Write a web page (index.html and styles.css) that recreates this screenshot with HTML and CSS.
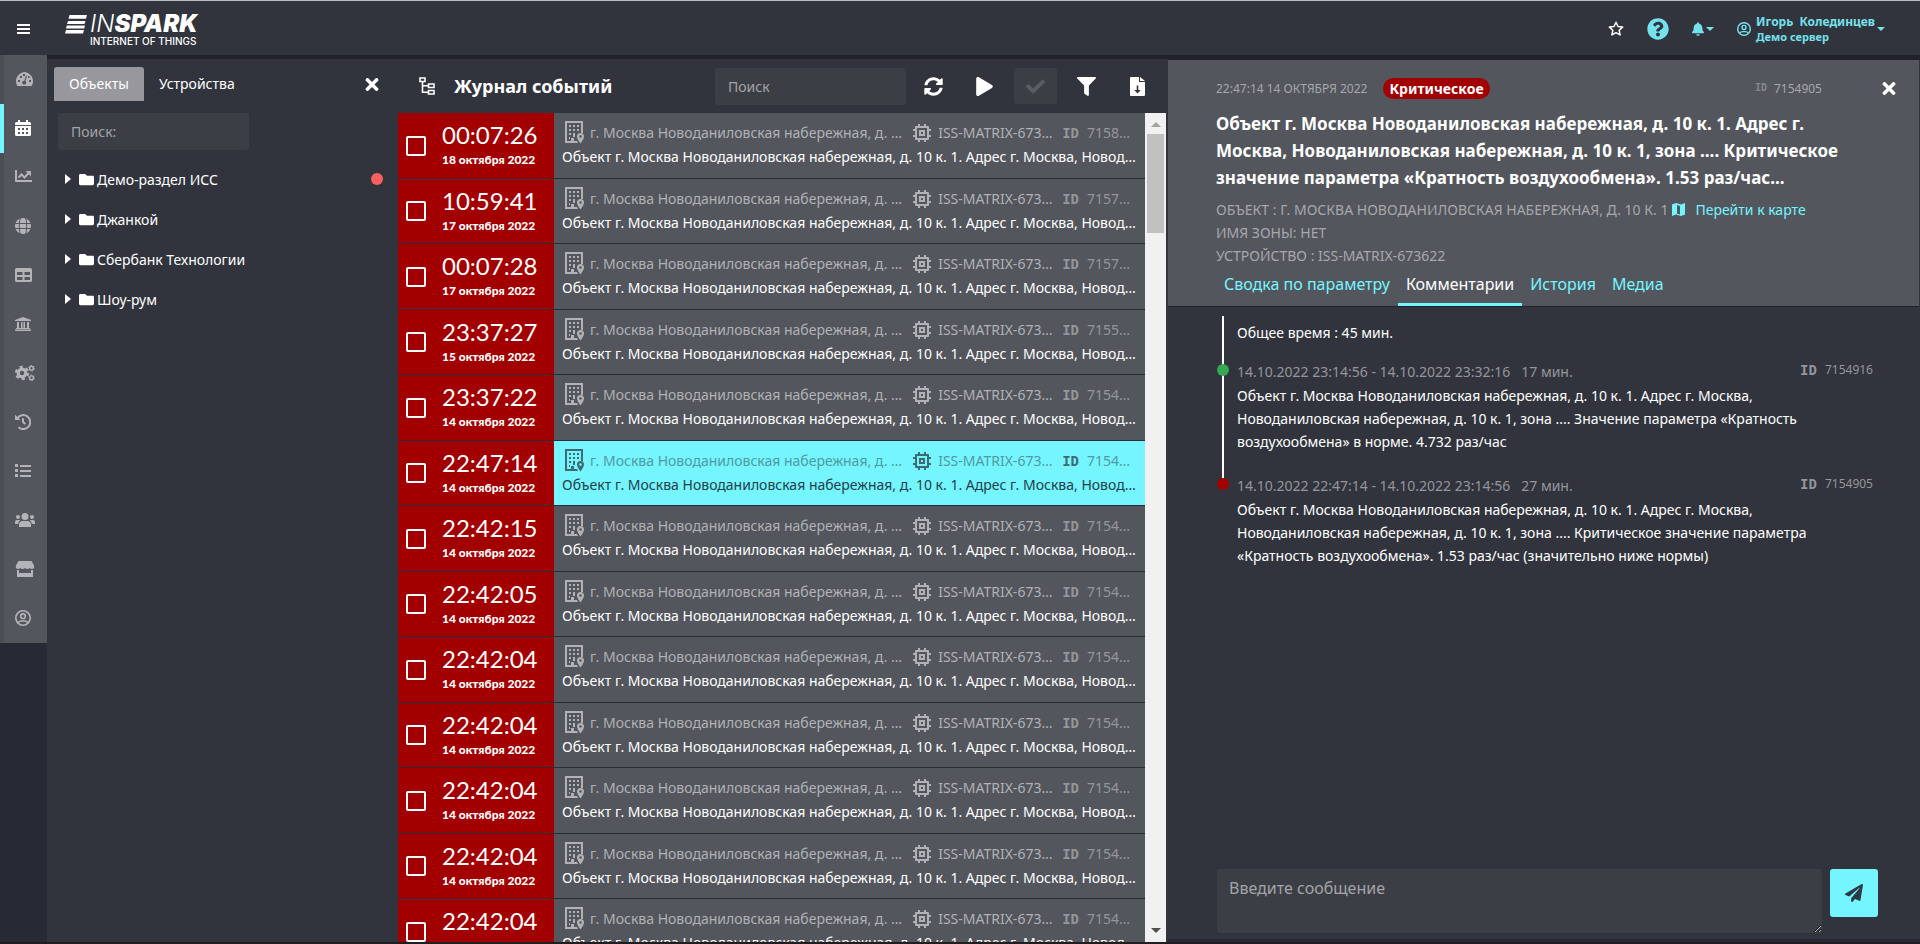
FILE: index.html
```html
<!DOCTYPE html>
<html lang="ru">
<head>
<meta charset="utf-8">
<meta name="viewport" content="width=device-width, initial-scale=1">
<title>INSPARK — Журнал событий</title>
<link rel="stylesheet" href="styles.css">
</head>
<body>
<svg class="sprite" aria-hidden="true">
  <symbol id="i-times" viewBox="0 0 352 512"><path d="M242.720 256l100.070-100.070c12.280-12.280 12.280-32.190 0-44.480l-22.240-22.240c-12.280-12.280-32.190-12.280-44.480 0L176 189.280 75.930 89.210c-12.280-12.280-32.190-12.280-44.480 0L9.210 111.450c-12.280 12.280-12.280 32.190 0 44.480L109.280 256 9.210 356.070c-12.280 12.280-12.280 32.190 0 44.480l22.240 22.240c12.280 12.280 32.200 12.280 44.480 0L176 322.720l100.070 100.070c12.280 12.280 32.200 12.280 44.480 0l22.240-22.240c12.280-12.280 12.280-32.190 0-44.480L242.720 256z"/></symbol>
  <symbol id="i-folder" viewBox="0 0 512 512"><path d="M464 128H272l-64-64H48C21.490 64 0 85.490 0 112v288c0 26.510 21.490 48 48 48h416c26.510 0 48-21.490 48-48V176c0-26.510-21.490-48-48-48z"/></symbol>
  <symbol id="i-user" viewBox="0 0 16 16"><g fill="none" stroke="currentColor" stroke-width="1.600"><circle cx="8" cy="8" r="7.200"/><circle cx="8" cy="6.200" r="2.300"/><path d="M3.200 12.600c1-2 2.600-1.600 4.800-1.600s3.800-.4 4.800 1.600"/></g></symbol>
  <symbol id="i-building" viewBox="0 0 19 23"><path fill-rule="evenodd" d="M0 0h18v12h-2V2H2v18h4v-3h3v3h3l1 2H0z"/><path d="M4 4h2v2H4zM8 4h2v2H8zM12 4h2v2h-2zM4 8h2v2H4zM8 8h2v2H8zM12 8h2v2h-2zM4 12h2v2H4zM8 12h2v2H8zM4 16h1v2H4zM8 14h2v2H8z"/><path fill-rule="evenodd" d="M15.500 12a3.500 3.500 0 0 1 3.500 3.500c0 2.500-3.500 7-3.500 7s-3.500-4.500-3.500-7a3.500 3.500 0 0 1 3.500-3.500zm0 2.200a1.300 1.300 0 1 0 0 2.600 1.300 1.300 0 0 0 0-2.600z"/></symbol>
  <symbol id="i-chip" viewBox="0 0 18 18"><path fill-rule="evenodd" d="M5 0h2v2h4V0h2v2h2a1 1 0 0 1 1 1v2h2v2h-2v4h2v2h-2v2a1 1 0 0 1-1 1h-2v2h-2v-2H7v2H5v-2H3a1 1 0 0 1-1-1v-2H0v-2h2V7H0V5h2V3a1 1 0 0 1 1-1h2zM4 4v10h10V4zM6 6h6v6H6zM8 8v2h2V8z"/></symbol>
</svg>

<header class="topbar">
  <button class="icon-btn menu-btn" aria-label="Меню"><svg width="13" height="11" viewBox="0 0 13 11"><path d="M0 0h13v2H0zM0 4h13v2H0zM0 8h13v2H0z"/></svg></button>
  <a class="logo" href="#" aria-label="INSPARK Internet of Things">
    <svg class="logo-mark" width="23" height="19" viewBox="0 0 23 19"><path d="M4.500 0H22l-1 3.800H3.500zM3 6h17.500l-1 3H2zM1.800 10.500H20l-.8 3H1zM1 15h18l-1 3.500H0z"/></svg>
    <span class="logo-words"><span class="logo-name"><span class="logo-thin">IN</span>SPARK</span><span class="logo-sub">INTERNET OF THINGS</span></span>
  </a>
  <nav class="top-actions" aria-label="Действия">
    <button class="icon-btn star-btn" aria-label="Избранное"><svg width="16" height="16" viewBox="0 0 16 16"><path fill="none" stroke="currentColor" stroke-width="1.500" stroke-linejoin="round" d="M8 1.300l2 4.200 4.600.6-3.400 3.200.9 4.600L8 11.700l-4.100 2.200.9-4.600L1.400 6.100 6 5.500z"/></svg></button>
    <button class="icon-btn" aria-label="Помощь"><svg width="22" height="22" viewBox="0 0 512 512"><path d="M504 256c0 136.997-111.043 248-248 248S8 392.997 8 256C8 119.083 119.043 8 256 8s248 111.083 248 248zM262.655 90c-54.497 0-89.255 22.957-116.549 63.758-3.536 5.286-2.353 12.415 2.715 16.258l34.699 26.310c5.205 3.947 12.621 3.008 16.665-2.122 17.864-22.658 30.113-35.797 57.303-35.797 20.429 0 45.698 13.148 45.698 32.958 0 14.976-12.363 22.667-32.534 33.976C247.128 238.528 216 254.941 216 296v4c0 6.627 5.373 12 12 12h56c6.627 0 12-5.373 12-12v-1.333c0-28.462 83.186-29.647 83.186-106.667 0-58.002-60.165-102-116.531-102zM256 338c-25.365 0-46 20.635-46 46 0 25.364 20.635 46 46 46s46-20.636 46-46c0-25.365-20.635-46-46-46z"/></svg></button>
    <button class="icon-btn bell-btn" aria-label="Уведомления"><svg width="12" height="14" viewBox="0 0 448 512"><path d="M224 512c35.320 0 63.970-28.650 63.970-64H160.030c0 35.350 28.650 64 63.970 64zm215.390-149.710c-19.320-20.760-55.470-51.990-55.470-154.290 0-77.700-54.480-139.900-127.940-155.160V32c0-17.670-14.320-32-31.980-32s-31.980 14.330-31.980 32v20.840C118.560 68.100 64.080 130.300 64.080 208c0 102.300-36.150 133.530-55.470 154.290-6 6.450-8.660 14.160-8.610 21.710.110 16.400 12.980 32 32.100 32h383.800c19.120 0 32-15.600 32.100-32 .050-7.550-2.610-15.270-8.610-21.710z"/></svg><svg width="8" height="4" viewBox="0 0 8 4"><path d="M0 0h8L4 4z"/></svg></button>
    <button class="icon-btn user-btn"><svg width="14" height="14"><use href="#i-user"/></svg><span class="user-text"><span class="user-name">Игорь&nbsp; Колединцев</span><span class="user-server">Демо сервер</span></span><svg width="8" height="4" viewBox="0 0 8 4"><path d="M0 0h8L4 4z"/></svg></button>
  </nav>
</header>

<div class="workspace">
  <nav class="rail" aria-label="Разделы">
    <a href="#" aria-label="Панель"><svg width="19" height="16" viewBox="0 0 19 16"><path fill-rule="evenodd" d="M9.500 1A9.300 9.300 0 0 1 17 14.500a1 1 0 0 1-1 .5H3a1 1 0 0 1-1-.5A9.300 9.300 0 0 1 9.500 1zM3 9h2v2H3zM5 5h2v2H5zM8 3h2v2H8zM14 9h2v2h-2zM13 5h1.500v2H13zM11 4.500l1 .4-1.600 5.200A2 2 0 1 1 9.400 9.700z"/></svg></a>
    <a href="#" class="active" aria-current="page" aria-label="Журнал"><svg width="16" height="16" viewBox="0 0 16 16"><path fill-rule="evenodd" d="M3 0h2v2h6V0h2v2h1.500A1.500 1.500 0 0 1 16 3.500V5H0V3.500A1.500 1.500 0 0 1 1.500 2H3zM0 6h16v8.500a1.500 1.500 0 0 1-1.500 1.500h-13A1.500 1.500 0 0 1 0 14.500zM3 8v2h2V8zM7 8v2h2V8zM11 8v2h2V8zM3 12v2h2v-2zM7 12v2h2v-2zM11 12v2h2v-2z"/></svg></a>
    <a href="#" aria-label="Графики"><svg width="17" height="13" viewBox="0 0 17 13"><path d="M0 0h2v10h15v2H1a1 1 0 0 1-1-1z"/><path fill="none" stroke="currentColor" stroke-width="2" d="M3.500 7.500l3-3 3 3 4-4.200"/><path d="M10.500 1H16v5.500z"/></svg></a>
    <a href="#" aria-label="Карта"><svg width="16" height="16" viewBox="0 0 16 16"><circle cx="8" cy="8" r="8"/><path class="cut" d="M0 5.500h16M0 10.500h16M5.300 0c-1.400 5-1.400 11 0 16M10.700 0c1.400 5 1.400 11 0 16"/></svg></a>
    <a href="#" aria-label="Таблица"><svg width="17" height="14" viewBox="0 0 17 14"><path fill-rule="evenodd" d="M1.500 0h14A1.500 1.500 0 0 1 17 1.500v11a1.500 1.500 0 0 1-1.500 1.500h-14A1.500 1.500 0 0 1 0 12.500v-11A1.500 1.500 0 0 1 1.500 0zM2 4v3h5.500V4zM9.500 4v3H15V4zM2 9v3h5.500V9zM9.500 9v3H15V9z"/></svg></a>
    <a href="#" aria-label="Организации"><svg width="16" height="14" viewBox="0 0 16 14"><path d="M8 0l8 3v1H0V3zM2 5h2v6H2zM6 5h1.500v6H6zM8.500 5H10v6H8.500zM12 5h2v6h-2zM1 11h14v1H1zM0 12.500h16V14H0z"/></svg></a>
    <a href="#" aria-label="Настройки"><svg width="20" height="16" viewBox="0 0 20 16"><g fill="none" stroke="currentColor"><circle cx="7" cy="8" r="3.800" stroke-width="3.200"/><circle cx="7" cy="8" r="6" stroke-width="2.400" stroke-dasharray="3.140 3.140"/><circle cx="16.500" cy="3.200" r="1.900" stroke-width="1.400"/><circle cx="16.500" cy="3.200" r="2.800" stroke-width="1" stroke-dasharray="1.470 1.470"/><circle cx="16.500" cy="12.800" r="1.900" stroke-width="1.400"/><circle cx="16.500" cy="12.800" r="2.800" stroke-width="1" stroke-dasharray="1.470 1.470"/></g></svg></a>
    <a href="#" aria-label="История"><svg width="16" height="16" viewBox="0 0 16 16"><path fill="none" stroke="currentColor" stroke-width="2" d="M2.500 4A7 7 0 1 1 3.500 13.300M8 4.200V8l2.400 2"/><path d="M0 .8V6h5.600z"/></svg></a>
    <a href="#" aria-label="Список"><svg width="16" height="14" viewBox="0 0 16 14"><path d="M0 0h3v3H0zM5 1h11v2H5zM0 5h3v3H0zM5 6h11v2H5zM0 10h3v3H0zM5 11h11v2H5z"/></svg></a>
    <a href="#" aria-label="Пользователи"><svg width="20" height="14" viewBox="0 0 20 14"><circle cx="10" cy="3.500" r="3.500"/><path d="M4 14v-2.500C4 9.500 5.500 8 7.500 8h5c2 0 3.500 1.500 3.500 3.500V14z"/><circle cx="3" cy="4" r="2"/><circle cx="17" cy="4" r="2"/><path d="M0 11V9a2 2 0 0 1 2-2h2.500l.5.500C3.800 8.500 3.300 9.500 3.200 11zM20 11V9a2 2 0 0 0-2-2h-2.500l-.5.500c1.200 1 1.700 2 1.800 3.500z"/></svg></a>
    <a href="#" aria-label="Магазин"><svg width="20" height="16" viewBox="0 0 20 16"><path d="M3.500 0h13L19 4.500c.8 2-.4 3.500-2 3.500-1 0-1.700-.4-2.200-1-.6.600-1.300 1-2.300 1s-1.900-.4-2.500-1c-.6.600-1.500 1-2.500 1s-1.700-.4-2.300-1C4.700 7.600 4 8 3 8 1.400 8 .2 6.500 1 4.500zM2 9h2v3h12V9h2v7H2z"/></svg></a>
    <a href="#" aria-label="Профиль"><svg width="16" height="16"><use href="#i-user"/></svg></a>
  </nav>

  <aside class="tree">
    <div class="tree-head">
      <div class="tree-tabs" role="tablist">
        <button role="tab" aria-selected="true" class="tree-tab selected">Объекты</button>
        <button role="tab" aria-selected="false" class="tree-tab">Устройства</button>
      </div>
      <button class="icon-btn" aria-label="Закрыть"><svg width="14" height="19"><use href="#i-times"/></svg></button>
    </div>
    <input class="field tree-search" type="search" placeholder="Поиск:" aria-label="Поиск объектов">
    <ul class="tree-list">
      <li><button class="node"><svg width="6" height="10" viewBox="0 0 6 10"><path d="M0 0l6 5-6 5z"/></svg><svg class="folder" width="15" height="15"><use href="#i-folder"/></svg>Демо-раздел ИСС</button><span class="alert-dot"></span></li>
      <li><button class="node"><svg width="6" height="10" viewBox="0 0 6 10"><path d="M0 0l6 5-6 5z"/></svg><svg class="folder" width="15" height="15"><use href="#i-folder"/></svg>Джанкой</button></li>
      <li><button class="node"><svg width="6" height="10" viewBox="0 0 6 10"><path d="M0 0l6 5-6 5z"/></svg><svg class="folder" width="15" height="15"><use href="#i-folder"/></svg>Сбербанк Технологии</button></li>
      <li><button class="node"><svg width="6" height="10" viewBox="0 0 6 10"><path d="M0 0l6 5-6 5z"/></svg><svg class="folder" width="15" height="15"><use href="#i-folder"/></svg>Шоу-рум</button></li>
    </ul>
  </aside>

  <main class="journal">
    <div class="journal-head">
      <button class="icon-btn" aria-label="Дерево"><svg width="16" height="18" viewBox="0 0 16 18"><g fill="none" stroke="currentColor" stroke-width="1.600"><path d="M1 1h5v3.500H1zM9.500 7H15v3.500H9.500zM9.500 13.500H15V17H9.500zM3.500 4.500v10.700h6M3.500 8.700h6"/></g></svg></button>
      <h1>Журнал событий</h1>
      <input class="field journal-search" type="search" placeholder="Поиск" aria-label="Поиск событий">
      <div class="tools">
        <button class="tool" aria-label="Обновить"><svg width="19" height="19" viewBox="0 0 512 512"><path d="M370.720 133.280C339.458 104.008 298.888 87.962 255.848 88c-77.458.068-144.328 53.178-162.791 126.850-1.344 5.363-6.122 9.150-11.651 9.150H24.103c-7.498 0-13.194-6.807-11.807-14.176C33.933 94.924 134.813 8 256 8c66.448 0 126.791 26.136 171.315 68.685L463.030 40.970C478.149 25.851 504 36.559 504 57.941V192c0 13.255-10.745 24-24 24H345.941c-21.382 0-32.090-25.851-16.971-40.971l41.750-41.749zM32 296h134.059c21.382 0 32.090 25.851 16.971 40.971l-41.750 41.750c31.262 29.273 71.835 45.319 114.876 45.280 77.418-.070 144.315-53.144 162.787-126.849 1.344-5.363 6.122-9.150 11.651-9.150h57.304c7.498 0 13.194 6.807 11.807 14.176C478.067 417.076 377.187 504 256 504c-66.448 0-126.791-26.136-171.315-68.685L48.970 471.030C33.851 486.149 8 475.441 8 454.059V320c0-13.255 10.745-24 24-24z"/></svg></button>
        <button class="tool" aria-label="Воспроизвести"><svg width="17" height="19" viewBox="0 0 448 512"><path d="M424.400 214.700L72.400 6.600C43.800-10.300 0 6.100 0 47.900V464c0 37.500 40.700 60.100 72.400 41.300l352-208c31.400-18.500 31.500-64.100 0-82.600z"/></svg></button>
        <button class="tool muted" disabled aria-label="Подтвердить"><svg width="19" height="19" viewBox="0 0 512 512"><path d="M173.898 439.404l-166.400-166.400c-9.997-9.997-9.997-26.206 0-36.204l36.203-36.204c9.997-9.998 26.207-9.998 36.204 0L192 312.690 432.095 72.596c9.997-9.997 26.207-9.997 36.204 0l36.203 36.204c9.997 9.997 9.997 26.206 0 36.204l-294.400 294.401c-9.998 9.997-26.207 9.997-36.204-.001z"/></svg></button>
        <button class="tool" aria-label="Фильтр"><svg width="19" height="19" viewBox="0 0 512 512"><path d="M487.976 0H24.028C2.710 0-8.047 25.866 7.058 40.971L192 225.941V432c0 7.831 3.821 15.170 10.237 19.662l80 55.980C298.020 518.690 320 507.493 320 487.980V225.941l184.947-184.970C520.021 25.896 509.338 0 487.976 0z"/></svg></button>
        <button class="tool" aria-label="Скачать"><svg width="15" height="19" viewBox="0 0 15 19"><path fill-rule="evenodd" d="M1 0h8v5h6v13a1 1 0 0 1-1 1H1a1 1 0 0 1-1-1V1a1 1 0 0 1 1-1zM6.700 8.500V13H4.200l3.300 3.500L10.800 13H8.300V8.500z"/><path d="M10 0l5 4h-5z"/></svg></button>
      </div>
    </div>
    <div class="journal-body">
      <ul class="events">
        <li class="event"><div class="stamp"><input type="checkbox" aria-label="Выбрать событие 1"><time><b>00:07:26</b><span>18 <i>октября</i> 2022</span></time></div><div class="info"><div class="source"><svg class="bld" width="19" height="23"><use href="#i-building"/></svg><span class="place">г. Москва Новоданиловская набережная, д. 10 к. 1</span><svg class="chip" width="18" height="18"><use href="#i-chip"/></svg><span class="device">ISS-MATRIX-673622</span><span class="id-mark">ID</span><span class="num">7158312</span></div><p>Объект г. Москва Новоданиловская набережная, д. 10 к. 1. Адрес г. Москва, Новоданиловская набережная</p></div></li>
        <li class="event"><div class="stamp"><input type="checkbox" aria-label="Выбрать событие 2"><time><b>10:59:41</b><span>17 <i>октября</i> 2022</span></time></div><div class="info"><div class="source"><svg class="bld" width="19" height="23"><use href="#i-building"/></svg><span class="place">г. Москва Новоданиловская набережная, д. 10 к. 1</span><svg class="chip" width="18" height="18"><use href="#i-chip"/></svg><span class="device">ISS-MATRIX-673622</span><span class="id-mark">ID</span><span class="num">7157640</span></div><p>Объект г. Москва Новоданиловская набережная, д. 10 к. 1. Адрес г. Москва, Новоданиловская набережная</p></div></li>
        <li class="event"><div class="stamp"><input type="checkbox" aria-label="Выбрать событие 3"><time><b>00:07:28</b><span>17 <i>октября</i> 2022</span></time></div><div class="info"><div class="source"><svg class="bld" width="19" height="23"><use href="#i-building"/></svg><span class="place">г. Москва Новоданиловская набережная, д. 10 к. 1</span><svg class="chip" width="18" height="18"><use href="#i-chip"/></svg><span class="device">ISS-MATRIX-673622</span><span class="id-mark">ID</span><span class="num">7157102</span></div><p>Объект г. Москва Новоданиловская набережная, д. 10 к. 1. Адрес г. Москва, Новоданиловская набережная</p></div></li>
        <li class="event"><div class="stamp"><input type="checkbox" aria-label="Выбрать событие 4"><time><b>23:37:27</b><span>15 <i>октября</i> 2022</span></time></div><div class="info"><div class="source"><svg class="bld" width="19" height="23"><use href="#i-building"/></svg><span class="place">г. Москва Новоданиловская набережная, д. 10 к. 1</span><svg class="chip" width="18" height="18"><use href="#i-chip"/></svg><span class="device">ISS-MATRIX-673622</span><span class="id-mark">ID</span><span class="num">7155820</span></div><p>Объект г. Москва Новоданиловская набережная, д. 10 к. 1. Адрес г. Москва, Новоданиловская набережная</p></div></li>
        <li class="event"><div class="stamp"><input type="checkbox" aria-label="Выбрать событие 5"><time><b>23:37:22</b><span>14 <i>октября</i> 2022</span></time></div><div class="info"><div class="source"><svg class="bld" width="19" height="23"><use href="#i-building"/></svg><span class="place">г. Москва Новоданиловская набережная, д. 10 к. 1</span><svg class="chip" width="18" height="18"><use href="#i-chip"/></svg><span class="device">ISS-MATRIX-673622</span><span class="id-mark">ID</span><span class="num">7154930</span></div><p>Объект г. Москва Новоданиловская набережная, д. 10 к. 1. Адрес г. Москва, Новоданиловская набережная</p></div></li>
        <li class="event current"><div class="stamp"><input type="checkbox" aria-label="Выбрать событие 6"><time><b>22:47:14</b><span>14 <i>октября</i> 2022</span></time></div><div class="info"><div class="source"><svg class="bld" width="19" height="23"><use href="#i-building"/></svg><span class="place">г. Москва Новоданиловская набережная, д. 10 к. 1</span><svg class="chip" width="18" height="18"><use href="#i-chip"/></svg><span class="device">ISS-MATRIX-673622</span><span class="id-mark">ID</span><span class="num">7154905</span></div><p>Объект г. Москва Новоданиловская набережная, д. 10 к. 1. Адрес г. Москва, Новоданиловская набережная</p></div></li>
        <li class="event"><div class="stamp"><input type="checkbox" aria-label="Выбрать событие 7"><time><b>22:42:15</b><span>14 <i>октября</i> 2022</span></time></div><div class="info"><div class="source"><svg class="bld" width="19" height="23"><use href="#i-building"/></svg><span class="place">г. Москва Новоданиловская набережная, д. 10 к. 1</span><svg class="chip" width="18" height="18"><use href="#i-chip"/></svg><span class="device">ISS-MATRIX-673622</span><span class="id-mark">ID</span><span class="num">7154899</span></div><p>Объект г. Москва Новоданиловская набережная, д. 10 к. 1. Адрес г. Москва, Новоданиловская набережная</p></div></li>
        <li class="event"><div class="stamp"><input type="checkbox" aria-label="Выбрать событие 8"><time><b>22:42:05</b><span>14 <i>октября</i> 2022</span></time></div><div class="info"><div class="source"><svg class="bld" width="19" height="23"><use href="#i-building"/></svg><span class="place">г. Москва Новоданиловская набережная, д. 10 к. 1</span><svg class="chip" width="18" height="18"><use href="#i-chip"/></svg><span class="device">ISS-MATRIX-673622</span><span class="id-mark">ID</span><span class="num">7154898</span></div><p>Объект г. Москва Новоданиловская набережная, д. 10 к. 1. Адрес г. Москва, Новоданиловская набережная</p></div></li>
        <li class="event"><div class="stamp"><input type="checkbox" aria-label="Выбрать событие 9"><time><b>22:42:04</b><span>14 <i>октября</i> 2022</span></time></div><div class="info"><div class="source"><svg class="bld" width="19" height="23"><use href="#i-building"/></svg><span class="place">г. Москва Новоданиловская набережная, д. 10 к. 1</span><svg class="chip" width="18" height="18"><use href="#i-chip"/></svg><span class="device">ISS-MATRIX-673622</span><span class="id-mark">ID</span><span class="num">7154897</span></div><p>Объект г. Москва Новоданиловская набережная, д. 10 к. 1. Адрес г. Москва, Новоданиловская набережная</p></div></li>
        <li class="event"><div class="stamp"><input type="checkbox" aria-label="Выбрать событие 10"><time><b>22:42:04</b><span>14 <i>октября</i> 2022</span></time></div><div class="info"><div class="source"><svg class="bld" width="19" height="23"><use href="#i-building"/></svg><span class="place">г. Москва Новоданиловская набережная, д. 10 к. 1</span><svg class="chip" width="18" height="18"><use href="#i-chip"/></svg><span class="device">ISS-MATRIX-673622</span><span class="id-mark">ID</span><span class="num">7154896</span></div><p>Объект г. Москва Новоданиловская набережная, д. 10 к. 1. Адрес г. Москва, Новоданиловская набережная</p></div></li>
        <li class="event"><div class="stamp"><input type="checkbox" aria-label="Выбрать событие 11"><time><b>22:42:04</b><span>14 <i>октября</i> 2022</span></time></div><div class="info"><div class="source"><svg class="bld" width="19" height="23"><use href="#i-building"/></svg><span class="place">г. Москва Новоданиловская набережная, д. 10 к. 1</span><svg class="chip" width="18" height="18"><use href="#i-chip"/></svg><span class="device">ISS-MATRIX-673622</span><span class="id-mark">ID</span><span class="num">7154895</span></div><p>Объект г. Москва Новоданиловская набережная, д. 10 к. 1. Адрес г. Москва, Новоданиловская набережная</p></div></li>
        <li class="event"><div class="stamp"><input type="checkbox" aria-label="Выбрать событие 12"><time><b>22:42:04</b><span>14 <i>октября</i> 2022</span></time></div><div class="info"><div class="source"><svg class="bld" width="19" height="23"><use href="#i-building"/></svg><span class="place">г. Москва Новоданиловская набережная, д. 10 к. 1</span><svg class="chip" width="18" height="18"><use href="#i-chip"/></svg><span class="device">ISS-MATRIX-673622</span><span class="id-mark">ID</span><span class="num">7154894</span></div><p>Объект г. Москва Новоданиловская набережная, д. 10 к. 1. Адрес г. Москва, Новоданиловская набережная</p></div></li>
        <li class="event"><div class="stamp"><input type="checkbox" aria-label="Выбрать событие 13"><time><b>22:42:04</b><span>14 <i>октября</i> 2022</span></time></div><div class="info"><div class="source"><svg class="bld" width="19" height="23"><use href="#i-building"/></svg><span class="place">г. Москва Новоданиловская набережная, д. 10 к. 1</span><svg class="chip" width="18" height="18"><use href="#i-chip"/></svg><span class="device">ISS-MATRIX-673622</span><span class="id-mark">ID</span><span class="num">7154893</span></div><p>Объект г. Москва Новоданиловская набережная, д. 10 к. 1. Адрес г. Москва, Новоданиловская набережная</p></div></li>
      </ul>
      <div class="scrollbar" aria-hidden="true">
        <svg class="up" width="10" height="5" viewBox="0 0 10 5"><path d="M0 5l5-5 5 5z"/></svg>
        <div class="thumb"></div>
        <svg class="down" width="10" height="5" viewBox="0 0 10 5"><path d="M0 0l5 5 5-5z"/></svg>
      </div>
    </div>
  </main>

  <section class="details">
    <div class="summary">
      <div class="summary-top">
        <time>22:47:14 14 ОКТЯБРЯ 2022</time>
        <span class="badge">Критическое</span>
        <span class="summary-id"><span class="id-small">ID</span>7154905</span>
        <button class="icon-btn" aria-label="Закрыть"><svg width="14" height="19"><use href="#i-times"/></svg></button>
      </div>
      <h2>Объект г. Москва Новоданиловская набережная, д. 10 к. 1. Адрес г. Москва, Новоданиловская набережная, д. 10 к. 1, зона .... Критическое значение параметра «Кратность воздухообмена». 1.53 раз/час...</h2>
      <div class="meta">
        <div class="meta-place">ОБЪЕКТ : Г. МОСКВА НОВОДАНИЛОВСКАЯ НАБЕРЕЖНАЯ, Д. 10 К. 1<a href="#"><svg width="13" height="13" viewBox="0 0 13 13"><path fill-rule="evenodd" d="M0 1.500L4 0l5 1.500L13 0v11.500L9 13l-5-1.500L0 13zM5 2v8.700l3 .9V2.900z"/></svg>Перейти к карте</a></div>
        <div>ИМЯ ЗОНЫ: НЕТ</div>
        <div>УСТРОЙСТВО : ISS-MATRIX-673622</div>
      </div>
      <div class="tabs" role="tablist">
        <button role="tab" aria-selected="false">Сводка по параметру</button>
        <button role="tab" aria-selected="true" class="on">Комментарии</button>
        <button role="tab" aria-selected="false">История</button>
        <button role="tab" aria-selected="false">Медиа</button>
      </div>
    </div>
    <div class="comments">
      <div class="total">Общее время : 45 мин.</div>
      <article class="entry ok">
        <div class="entry-head"><span>14.10.2022 23:14:56 - 14.10.2022 23:32:16 &nbsp; 17 мин.</span><span class="entry-id"><span class="id-mark">ID</span>7154916</span></div>
        <p>Объект г. Москва Новоданиловская набережная, д. 10 к. 1. Адрес г. Москва, Новоданиловская набережная, д. 10 к. 1, зона .... Значение параметра «Кратность воздухообмена» в норме. 4.732 раз/час</p>
      </article>
      <article class="entry bad">
        <div class="entry-head"><span>14.10.2022 22:47:14 - 14.10.2022 23:14:56 &nbsp; 27 мин.</span><span class="entry-id"><span class="id-mark">ID</span>7154905</span></div>
        <p>Объект г. Москва Новоданиловская набережная, д. 10 к. 1. Адрес г. Москва, Новоданиловская набережная, д. 10 к. 1, зона .... Критическое значение параметра «Кратность воздухообмена». 1.53 раз/час (значительно ниже нормы)</p>
      </article>
    </div>
    <form class="composer">
      <textarea placeholder="Введите сообщение" aria-label="Введите сообщение"></textarea>
      <button type="button" class="send" aria-label="Отправить"><svg width="18" height="18" viewBox="0 0 512 512"><path d="M476 3.200L12.500 270.600c-18.100 10.400-15.800 35.600 2.200 43.200L121 358.400l287.300-253.200c5.500-4.900 13.300 2.600 8.600 8.300L176 407v80.500c0 23.600 28.500 32.900 42.500 15.800L282 426l124.600 52.200c14.200 6 30.400-2.900 33-18.200l72-432C515 7.800 493.300-6.800 476 3.200z"/></svg></button>
    </form>
  </section>
</div>
</body>
</html>
```

FILE: styles.css
```css
:root {
  --bg: #31343d;
  --field: #3c3e46;
  --panel: #53565d;
  --dark: #20212b;
  --cyan: #75f5ff;
  --red: #a20000;
  --muted: #a6a8ac;
}

* { box-sizing: border-box; }

body {
  margin: 0;
  height: 100vh;
  display: flex;
  flex-direction: column;
  overflow: hidden;
  padding-bottom: 2px;
  background: #211d20;
  color: #fff;
  font: 14px/23px "Noto Sans", "Open Sans", sans-serif;
}

button, input, textarea { font: inherit; color: inherit; border: 0; margin: 0; padding: 0; }
button { background: none; cursor: pointer; }
svg { fill: currentColor; flex: none; display: block; }
ul { list-style: none; margin: 0; padding: 0; }
p, h1, h2 { margin: 0; }
.sprite { position: absolute; width: 0; height: 0; }
.icon-btn { display: flex; align-items: center; }

/* Top bar */
.topbar {
  flex: none;
  height: 55px;
  display: flex;
  align-items: center;
  border-top: 1px solid #b4bcc6;
  background: var(--bg);
  padding: 2px 35px 0 17px;
}
.menu-btn { margin-right: 35px; }
.logo { display: flex; align-items: flex-start; gap: 2px; padding-top: 4px; color: #fff; text-decoration: none; font-family: Inter, sans-serif; }
.logo-words { display: flex; flex-direction: column; }
.logo-name { font-size: 24px; line-height: 18px; font-weight: 900; font-style: italic; }
.logo-thin { font-weight: 300; }
.logo-sub { font-size: 10px; line-height: 12px; font-weight: 500; padding-top: 2px; }
.top-actions { margin-left: auto; display: flex; align-items: center; gap: 23px; color: #74e1ec; }
.star-btn { color: #fff; }
.bell-btn { gap: 2px; }
.user-btn { gap: 5px; text-align: left; font-weight: 700; }
.user-btn > svg:last-child { margin-left: -3px; }
.user-text { display: flex; flex-direction: column; line-height: 15px; }
.user-name { font-size: 12px; }
.user-server { font-size: 11px; }

/* Columns */
.workspace {
  flex: 1;
  min-height: 0;
  display: grid;
  grid-template-columns: 47px minmax(0, 351fr) minmax(0, 770fr) minmax(0, 752fr);
  background: #272a34;
}

.rail { align-self: start; background: var(--panel); color: #b3b4b7; }
.rail a { display: flex; align-items: center; height: 49px; padding: 0 0 2px 11px; color: inherit; border-left: 4px solid #4b4e55; }
.rail a.active { color: #fff; border-color: var(--cyan); }
.rail .cut { fill: none; stroke: var(--panel); }

/* Object tree */
.tree { background: var(--bg); border-top: 4px solid var(--dark); padding: 8px 15px 0 7px; }
.tree-head { display: flex; justify-content: space-between; align-items: center; }
.tree-tabs { display: flex; }
.tree-tab { height: 34px; padding: 0 15px 2px; border-radius: 3px 3px 0 0; }
.tree-tab.selected { background: #97979d; }
.tree-head .icon-btn { margin-right: 4px; }
.field { height: 37px; padding: 0 13px; border-radius: 3px; background: var(--field); appearance: none; }
.field::placeholder, textarea::placeholder { color: #a3a4a8; opacity: 1; }
.tree-search { display: block; width: 191px; margin: 12px 0 0 4px; }
.tree-list { padding: 9px 0 0 11px; }
.tree-list li { display: flex; justify-content: space-between; align-items: center; height: 40px; }
.node { display: flex; align-items: center; }
.folder { margin: 0 3px 0 8px; }
.alert-dot { width: 12px; height: 12px; border-radius: 50%; background: #fb6060; }

/* Event journal */
.journal { display: flex; flex-direction: column; min-height: 0; background: var(--bg); border-top: 4px solid var(--dark); padding-right: 2px; }
.journal-head { flex: none; display: flex; align-items: center; height: 54px; padding: 0 7px 0 21px; }
.journal-head h1 { font-size: 18px; font-weight: 700; line-height: 24px; margin-left: 19px; white-space: nowrap; }
.journal-search { width: 191px; margin-left: auto; }
.tools { display: flex; gap: 8px; margin-left: 6px; }
.tool { width: 43px; height: 36px; display: flex; align-items: center; justify-content: center; border-radius: 3px; }
.tool.muted { background: var(--field); color: #5b5d64; }
.journal-body { flex: 1; min-height: 0; display: flex; }
.events { flex: 1; min-width: 0; overflow: hidden; display: grid; grid-auto-rows: 66px 65px; }
.event { display: flex; border-bottom: 1px solid #2a2c36; background: var(--panel); overflow: hidden; }
.stamp { flex: none; width: 156px; display: flex; align-items: center; gap: 16px; padding-left: 8px; background: var(--red); }
.stamp input { appearance: none; width: 20px; height: 20px; border: 2px solid #fff; border-radius: 2px; }
.stamp time { display: flex; flex-direction: column; font-family: Lato, "Noto Sans", sans-serif; }
.stamp b { font-size: 24px; line-height: 28px; font-weight: 400; }
.stamp span { font-size: 12px; line-height: 21px; font-weight: 900; white-space: nowrap; }
.stamp i { font-style: normal; }
.info { flex: 1; min-width: 0; padding: 7px 3px 0 8px; }
.info p { overflow: hidden; text-overflow: ellipsis; white-space: nowrap; }
.source { display: flex; align-items: center; height: 25px; padding-right: 8px; color: #b0b2b5; }
.source span { overflow: hidden; text-overflow: ellipsis; white-space: nowrap; }
.bld { margin: 0 6px 0 3px; }
.place { flex: 1; min-width: 0; }
.chip { margin: 0 7px 0 10px; }
.device { flex: none; width: 115px; }
.id-mark { flex: none; font: 700 14px/20px "DejaVu Sans Mono", monospace; color: #94969b; }
.source .id-mark { margin: 0 8px 0 9px; }
.num { flex: none; width: 47px; color: #94969b; }
.current .info { background: var(--cyan); color: #22404a; }
.current .source, .current .num { color: #4f9aa3; }
.current .bld, .current .chip, .current .id-mark { color: #3d6a73; }

.scrollbar { flex: none; width: 21px; display: flex; flex-direction: column; align-items: center; background: #f1f1f1; }
.up { margin: 9px 0 7px; color: #a3a3a3; }
.down { margin: auto 0 9px; color: #505050; }
.thumb { width: 17px; height: 99px; background: #c1c1c1; }

/* Event details */
.details { display: flex; flex-direction: column; min-height: 0; margin-bottom: 3px; background: var(--bg); border-top: 5px solid var(--dark); }
.summary { padding: 14px 23px 0 48px; margin-right: 1px; background: var(--panel); border-bottom: 1px solid #1f212a; color: var(--muted); }
.summary-top { display: flex; align-items: center; height: 28px; font-size: 12px; }
.badge { margin-left: 16px; padding: 0 6px; border-radius: 11px; background: var(--red); color: #fff; font-size: 14px; line-height: 21px; font-weight: 700; }
.summary-id { margin-left: auto; display: flex; align-items: center; gap: 7px; }
.id-small { font: 700 10px/16px "DejaVu Sans Mono", monospace; color: #85878c; }
.summary-top .icon-btn { margin-left: 60px; color: #fff; }
.summary h2 { max-width: 640px; padding-top: 8px; color: #fff; font-size: 17px; line-height: 27px; font-weight: 700; }
.meta { padding-top: 7px; }
.meta-place { display: flex; align-items: center; }
.meta a { display: flex; align-items: center; gap: 10px; margin-left: 4px; color: var(--cyan); text-decoration: none; }
.tabs { display: flex; color: var(--cyan); font-size: 16px; }
.tabs button { height: 39px; padding: 0 8px 2px; border-bottom: 3px solid transparent; }
.tabs .on { color: #fff; border-color: var(--cyan); }

.comments { flex: 1; min-height: 0; padding: 9px 47px 0 54px; }
.total { height: 54px; padding: 5px 0 0 13px; border-left: 2px solid #fff; }
.entry { position: relative; height: 114px; padding-left: 13px; border-left: 2px solid #fff; }
.entry::before { content: ""; position: absolute; left: -7px; top: -6px; width: 12px; height: 12px; border-radius: 50%; background: #34a853; }
.entry.bad { border-color: transparent; }
.entry.bad::before { background: var(--red); }
.entry-head { display: flex; justify-content: space-between; align-items: flex-start; height: 14px; color: #94969b; }
.entry-head > span { margin-top: -10px; }
.entry-id { display: flex; gap: 8px; align-items: center; font-size: 12px; line-height: 18px; }

.composer { flex: none; display: flex; align-items: flex-start; gap: 8px; padding: 0 42px 6px 49px; }
.composer textarea { flex: 1; height: 64px; padding: 8px 12px; border-radius: 3px; background: var(--field); font-size: 16px; resize: both; }
.send { width: 48px; height: 48px; display: flex; align-items: center; justify-content: center; border-radius: 3px; background: var(--cyan); color: #2b3a44; }
```
